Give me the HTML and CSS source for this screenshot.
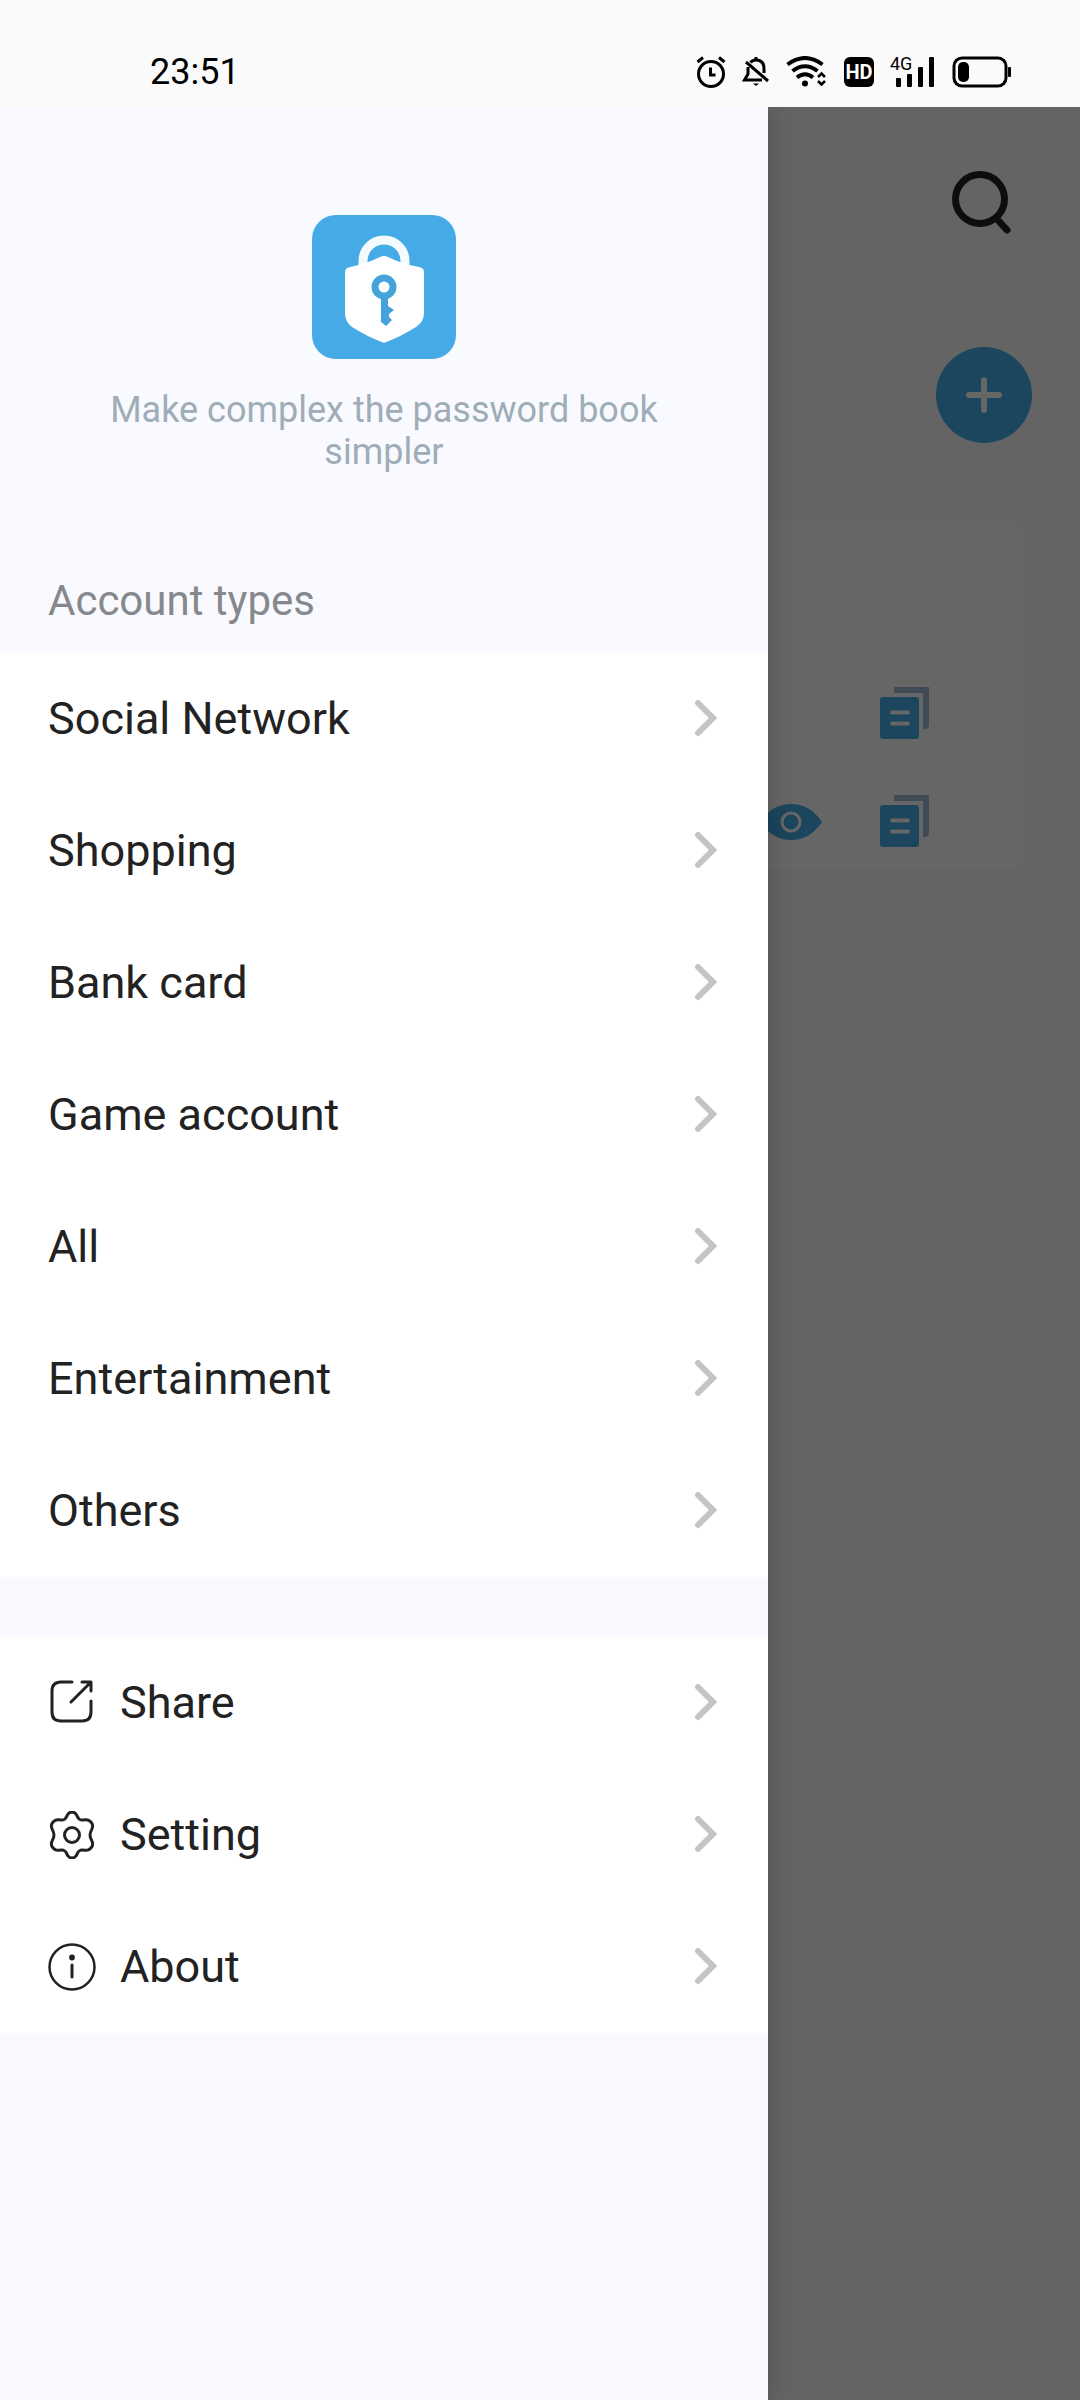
FILE: index.html
```html
<!DOCTYPE html>
<html lang="en">
    <head>
        <meta charset="UTF-8">
        <meta name="viewport" content="width=device-width, initial-scale=1.0">
        <title>Password Book</title>
        <link rel="stylesheet" href="styles.css">
    </head>
    <body>
        <!-- shapes used more than once -->
        <svg class="sprite" aria-hidden="true">
            <symbol id="chevron" viewBox="0 0 24 38">
                <path d="M4 3 L19 18 L4 33" fill="none" stroke="#c4c4c4" stroke-width="6" stroke-linecap="round"/>
            </symbol>
            <symbol id="copyIcon" viewBox="0 0 50 54">
                <path d="M14 0 H49 V38 Q49 42 45 42 H43 V6 H14 Z" fill="#9fb8d6"/>
                <rect x="0" y="10" width="39" height="42" rx="3" fill="#45aee8"/>
                <path d="M12 25.500 H28 M12 36.500 H28" stroke="#fff" stroke-width="4" stroke-linecap="round"/>
            </symbol>
        </svg>

        <header class="status-bar">
            <span class="time">23:51</span>
            <div class="status-icons">
                <svg width="30" height="32" viewBox="0 0 30 32" fill="none" stroke="#000" stroke-width="3">
                    <circle cx="15" cy="18" r="12.500"/>
                    <path d="M14.500 11.500 V19 H19.500"/>
                    <path d="M1.500 6 L7 1.500 M28.500 6 L23 1.500"/>
                </svg>
                <svg width="28" height="32" viewBox="0 0 28 32" fill="none" stroke="#000" stroke-width="3">
                    <path d="M8.500 6.500 Q10.500 4 14 4 Q22 4 22 13 V17"/>
                    <path d="M14 1 V4"/>
                    <path d="M6 11 V18 L2.500 24 H20"/>
                    <path d="M4 6 L26 25"/>
                    <path d="M11 27.500 H17 L14 30 Z" fill="#000" stroke="none"/>
                </svg>
                <svg width="42" height="32" viewBox="0 0 42 32" fill="none" stroke="#000" stroke-width="4">
                    <path d="M1.500 8.500 Q19 -4.500 36.500 8.500"/>
                    <path d="M6.500 15 Q19 5.500 31.500 15"/>
                    <path d="M11 21.500 Q19 15 27 21.500"/>
                    <circle cx="19" cy="27.500" r="3" fill="#000" stroke="none"/>
                    <path d="M32 21 L35.500 17.500 L39 21 M32 25 L35.500 28.500 L39 25" stroke-width="2.600"/>
                </svg>
                <span class="hd">HD</span>
                <div class="signal">
                    <span class="network">4G</span>
                    <svg width="46" height="32" viewBox="0 0 46 32" fill="#000">
                        <rect x="6" y="22" width="5" height="9" rx="1"/>
                        <rect x="17" y="18" width="5" height="13" rx="1"/>
                        <rect x="28" y="11" width="5" height="20" rx="1"/>
                        <rect x="39" y="1" width="5" height="30" rx="1"/>
                    </svg>
                </div>
                <svg width="60" height="32" viewBox="0 0 60 32">
                    <rect x="2" y="2" width="52" height="28" rx="8" fill="none" stroke="#000" stroke-width="3"/>
                    <rect x="6" y="6" width="11" height="20" rx="5"/>
                    <rect x="56" y="11" width="3" height="10" rx="1"/>
                </svg>
            </div>
        </header>

        <div class="screen">
            <main class="home">
                <div class="home-top">
                    <button class="icon-button" aria-label="Search">
                        <svg width="62" height="66" viewBox="0 0 62 66" fill="none" stroke="#222">
                            <circle cx="30" cy="30" r="24.500" stroke-width="7"/>
                            <path d="M46 49 L57 61" stroke-width="7" stroke-linecap="round"/>
                        </svg>
                    </button>
                </div>
                <div class="home-add">
                    <button class="add-button" aria-label="Add account">
                        <svg width="42" height="42" viewBox="0 0 42 42">
                            <path d="M21 6 V36 M6 21 H36" stroke="#fff" stroke-width="6" stroke-linecap="round"/>
                        </svg>
                    </button>
                </div>
                <section class="card">
                    <div class="card-row">
                        <button class="icon-button" aria-label="Copy account"><svg width="50" height="54"><use href="#copyIcon"/></svg></button>
                    </div>
                    <div class="card-row">
                        <button class="icon-button" aria-label="Show password">
                            <svg width="62" height="36" viewBox="0 0 62 36">
                                <path d="M0 18 Q12 0 31 0 Q50 0 62 18 Q50 36 31 36 Q12 36 0 18 Z" fill="#45aee8"/>
                                <circle cx="31" cy="18" r="9" fill="none" stroke="#fff" stroke-width="3"/>
                            </svg>
                        </button>
                        <button class="icon-button" aria-label="Copy password"><svg width="50" height="54"><use href="#copyIcon"/></svg></button>
                    </div>
                </section>
            </main>
            <div class="overlay"></div>

            <aside class="drawer">
                <div class="brand">
                    <svg class="logo" viewBox="0 0 144 144">
                        <rect width="144" height="144" rx="24" fill="#45aae6"/>
                        <path d="M51 54 V46 A21 21 0 0 1 93 46 V54" fill="none" stroke="#f3fbff" stroke-width="9"/>
                        <path d="M68 42 Q72 40 76 42 Q90 49 107 52 Q112 53 112 57 V98 Q112 107 104 112 Q90 121 72 128 Q54 121 40 112 Q33 107 33 98 V57 Q33 53 38 52 Q54 49 68 42 Z" fill="#fff"/>
                        <circle cx="72" cy="72" r="9" fill="none" stroke="#45a3dc" stroke-width="7"/>
                        <path d="M69 82 H76 V91 L82 95 L77 99 V102 L80 105 L74 111 L69 107 Z" fill="#45a3dc"/>
                    </svg>
                    <p class="tagline">Make complex the password book simpler</p>
                </div>

                <h2 class="section-title">Account types</h2>
                <nav class="menu">
                    <a href="#social">Social Network<svg class="chevron"><use href="#chevron"/></svg></a>
                    <a href="#shopping">Shopping<svg class="chevron"><use href="#chevron"/></svg></a>
                    <a href="#bank">Bank card<svg class="chevron"><use href="#chevron"/></svg></a>
                    <a href="#game">Game account<svg class="chevron"><use href="#chevron"/></svg></a>
                    <a href="#all">All<svg class="chevron"><use href="#chevron"/></svg></a>
                    <a href="#entertainment">Entertainment<svg class="chevron"><use href="#chevron"/></svg></a>
                    <a href="#others">Others<svg class="chevron"><use href="#chevron"/></svg></a>
                </nav>

                <nav class="menu">
                    <a href="#share">
                        <svg class="menu-icon" viewBox="0 0 48 48">
                            <path d="M24 3 H13 Q4 3 4 12 V33 Q4 42 13 42 H34 Q43 42 43 33 V22"/>
                            <path d="M34 3 H43 V12 M42 4 L23 23"/>
                        </svg>
                        Share<svg class="chevron"><use href="#chevron"/></svg>
                    </a>
                    <a href="#setting">
                        <svg class="menu-icon" viewBox="0 0 48 48">
                            <path d="M20 3 Q24 -1 28 3 C30 6 30 9.500 35 9 C39 8 42 9 44 12.500 C46.500 17 42 19 42 24 C42 29 46.500 31 44 35.500 C42 39 39 40 35 39 C30 38.500 30 42 28 45 Q24 49 20 45 C18 42 18 38.500 13 39 C9 40 6 39 4 35.500 C1.500 31 6 29 6 24 C6 19 1.500 17 4 12.500 C6 9 9 8 13 9 C18 9.500 18 6 20 3 Z"/>
                            <circle cx="24" cy="24" r="7.500"/>
                        </svg>
                        Setting<svg class="chevron"><use href="#chevron"/></svg>
                    </a>
                    <a href="#about">
                        <svg class="menu-icon" viewBox="0 0 48 48">
                            <circle cx="24" cy="24" r="22.500" stroke-width="2.500"/>
                            <path d="M24 22 V34"/>
                            <circle cx="24" cy="14.500" r="1.400"/>
                        </svg>
                        About<svg class="chevron"><use href="#chevron"/></svg>
                    </a>
                </nav>
            </aside>
        </div>
    </body>
</html>
```

FILE: styles.css
```css
*{
    margin: 0;
    padding: 0;
    box-sizing: border-box;
}

body{
    display: flex;
    flex-direction: column;
    min-height: 100vh;
    background-color: #fafafa;
    font-family: Roboto, "Liberation Sans", sans-serif;
    color: #222;
}

svg{
    display: block;
    flex-shrink: 0;
}

.sprite{
    position: absolute;
    width: 0;
    height: 0;
}

/* status bar */
.status-bar{
    display: flex;
    align-items: center;
    justify-content: space-between;
    padding: 56px 68px 19px 150px;
}

.time{
    font-size: 36px;
    line-height: 32px;
    color: #000;
}

.status-icons{
    display: flex;
    align-items: center;
    gap: 16px;
}

.hd{
    width: 30px;
    border-radius: 6px;
    background-color: #000;
    color: #fff;
    font-size: 20px;
    font-weight: bold;
    line-height: 30px;
    text-align: center;
}

.signal{
    position: relative;
}

.network{
    position: absolute;
    top: 0;
    left: 0;
    font-size: 18px;
    line-height: 16px;
    color: #000;
}

/* page under the drawer */
.screen{
    position: relative;
    flex: 1;
    overflow: hidden;
}

.home{
    padding: 62px 48px;
}

.home-top, .home-add, .card-row{
    display: flex;
    justify-content: flex-end;
}

.home-top{
    padding-right: 20px;
}

.icon-button{
    border: none;
    background-color: transparent;
}

.add-button{
    display: flex;
    align-items: center;
    justify-content: center;
    margin-top: 112px;
    width: 96px;
    height: 96px;
    border: none;
    border-radius: 50%;
    background-color: #45aee8;
}

.card{
    display: flex;
    flex-direction: column;
    gap: 54px;
    margin: 76px 8px 0 0;
    padding: 168px 94px 20px;
    border-radius: 16px;
    background-color: #fff;
}

.card-row{
    align-items: center;
    gap: 58px;
}

.overlay{
    position: absolute;
    inset: 0;
    background-color: rgba(0, 0, 0, 0.6);
}

/* drawer */
.drawer{
    position: absolute;
    top: 0;
    bottom: 0;
    left: 0;
    width: 71.1%;
    background-color: #f8faff;
    box-shadow: 0 0 24px rgba(0, 0, 0, 0.2);
}

.brand{
    padding: 108px 96px 0;
}

.logo{
    width: 144px;
    height: 144px;
    margin: 0 auto;
}

.tagline{
    margin-top: 30px;
    font-size: 36px;
    line-height: 42px;
    text-align: center;
    color: #9fadb8;
}

.section-title{
    padding: 101px 48px 25px;
    font-size: 42px;
    font-weight: normal;
    line-height: 54px;
    color: #86888c;
}

.menu{
    margin-bottom: 60px;
    background-color: #fff;
}

.menu a{
    display: flex;
    align-items: center;
    padding: 0 50px 0 48px;
    font-size: 45px;
    line-height: 132px;
    color: #222;
    text-decoration: none;
}

.chevron{
    width: 24px;
    height: 38px;
    margin-left: auto;
}

.menu-icon{
    width: 48px;
    height: 48px;
    margin-right: 24px;
    fill: none;
    stroke: #222;
    stroke-width: 3;
    stroke-linecap: round;
    stroke-linejoin: round;
}
```
